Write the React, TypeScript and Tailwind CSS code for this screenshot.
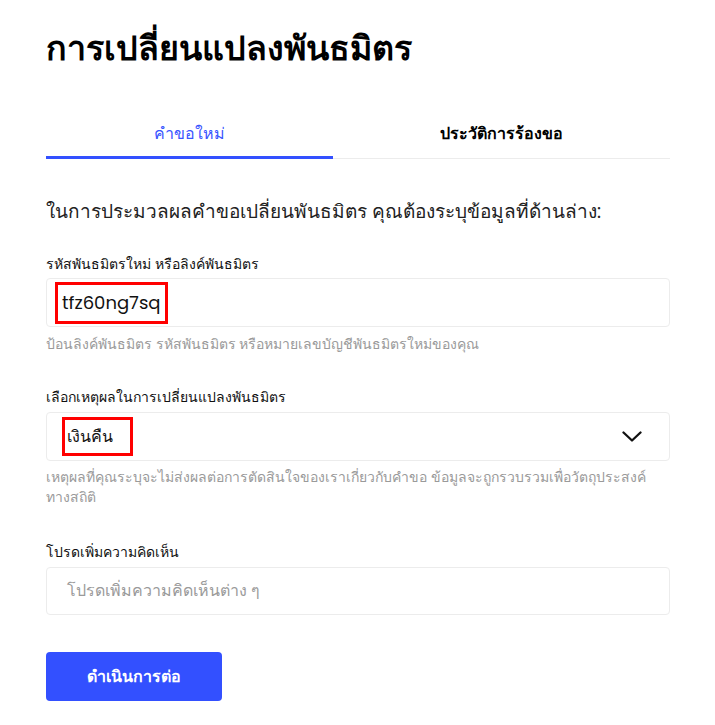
import React from "react";

export default function App() {
  const font = { fontFamily: 'Poppins, sans-serif' };
  return (
    <div className="w-[715px] h-[725px] bg-white text-[#111]" style={font}>
      <div className="pl-[46px] pr-[45px] pt-[24px]">
        <h1 className="text-[34px] font-bold leading-[48px] text-black">การเปลี่ยนแปลงพันธมิตร</h1>
        <div className="mt-[39px] flex border-b border-[#ececec]">
          <div className="w-[287px] flex flex-col items-center">
            <div className="h-[45px] flex items-center text-[16px] text-[#3a55ff]">คำขอใหม่</div>
            <div className="h-[3px] w-full bg-[#3350ff] -mb-px"></div>
          </div>
          <div className="flex-1 flex flex-col items-center">
            <div className="h-[45px] flex items-center text-[16px] font-semibold text-black">ประวัติการร้องขอ</div>
          </div>
        </div>
        <p className="mt-[39px] text-[19px] leading-[28px] text-[#222]">ในการประมวลผลคำขอเปลี่ยนพันธมิตร คุณต้องระบุข้อมูลที่ด้านล่าง:</p>

        <div className="mt-[28px] text-[14px] font-medium leading-[20px] text-[#111]">รหัสพันธมิตรใหม่ หรือลิงค์พันธมิตร</div>
        <div className="mt-[4px] h-[49px] border border-[#ececec] rounded-[4px] flex items-center pl-[8px]">
          <div className="h-[42px] border-[3px] border-[#ff0000] flex items-center pl-[4px] w-[113px] text-[18px] text-[#111]">tfz60ng7sq</div>
        </div>
        <div className="mt-[7px] text-[14px] leading-[20px] text-[#9a9a9a]">ป้อนลิงค์พันธมิตร รหัสพันธมิตร หรือหมายเลขบัญชีพันธมิตรใหม่ของคุณ</div>

        <div className="mt-[33px] text-[14px] font-medium leading-[20px] text-[#111]">เลือกเหตุผลในการเปลี่ยนแปลงพันธมิตร</div>
        <div className="mt-[5px] h-[49px] border border-[#ececec] rounded-[4px] flex items-center justify-between pl-[15px] pr-[27px]">
          <div className="h-[39px] border-[3px] border-[#ff0000] flex items-center pl-[2px] w-[71px] text-[16px] font-medium text-[#111]">เงินคืน</div>
          <svg width="20" height="11" viewBox="0 0 20 11" fill="none">
            <path d="M1.5 1.5l8.5 8 8.5-8" stroke="#111" strokeWidth="2.3" strokeLinecap="round" strokeLinejoin="round" />
          </svg>
        </div>
        <div className="mt-[6px] w-[605px] text-[14px] leading-[20px] text-[#9a9a9a]">เหตุผลที่คุณระบุจะไม่ส่งผลต่อการตัดสินใจของเราเกี่ยวกับคำขอ ข้อมูลจะถูกรวบรวมเพื่อวัตถุประสงค์ทางสถิติ</div>

        <div className="mt-[35px] text-[14px] font-medium leading-[20px] text-[#111]">โปรดเพิ่มความคิดเห็น</div>
        <div className="mt-[5px] h-[48px] border border-[#ececec] rounded-[4px] flex items-center pl-[20px] text-[16px] text-[#9a9a9a]">โปรดเพิ่มความคิดเห็นต่าง ๆ</div>

        <button className="mt-[37px] w-[176px] h-[49px] rounded-[4px] bg-[#3350ff] text-white text-[16px] font-semibold">ดำเนินการต่อ</button>
      </div>
    </div>
  );
}
